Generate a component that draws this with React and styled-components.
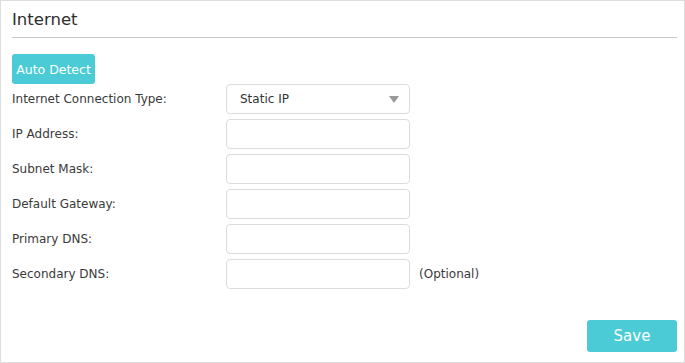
import styled, { createGlobalStyle } from "styled-components";

const Global = createGlobalStyle`
  html, body {
    margin: 0;
    padding: 0;
    background: #fff;
  }
  body {
    font-family: "DejaVu Sans", Verdana, sans-serif;
    color: #333;
  }
`;

const Panel = styled.div`
  width: 685px;
  height: 363px;
  box-sizing: border-box;
  border: 1px solid #ddd;
  padding: 0 7px 10px 11px;
  display: flex;
  flex-direction: column;
`;

const Title = styled.h2`
  margin: 0;
  padding: 10px 0 8px 0;
  font-size: 16.5px;
  font-weight: normal;
  color: #2e2e2e;
  border-bottom: 1px solid #c8c8c8;
  line-height: 18px;
`;

const Button = styled.button`
  font-family: inherit;
  background: #4acbd6;
  color: #fff;
  border: none;
  border-radius: 3px;
  cursor: pointer;
  font-size: ${(p) => (p.big ? "15px" : "12.5px")};
  font-weight: ${(p) => (p.big ? "normal" : "500")};
  width: ${(p) => (p.big ? "90px" : "83px")};
  height: ${(p) => (p.big ? "32px" : "30px")};
  padding: 0;
`;

const DetectWrap = styled.div`
  margin-top: 16px;
`;

const Form = styled.div`
  display: flex;
  flex-direction: column;
  gap: 5px;
`;

const Row = styled.div`
  display: flex;
  align-items: center;
  height: 30px;
`;

const Label = styled.label`
  width: 214px;
  font-size: 12px;
  color: #3a3a3a;
`;

const Field = styled.div`
  position: relative;
  width: 184px;
  height: 30px;
  box-sizing: border-box;
  border: 1px solid #dcdcdc;
  border-radius: 4px;
  background: #fff;
  display: flex;
  align-items: center;
  padding-left: 13px;
  font-size: 12px;
  color: #333;
`;

const Arrow = styled.span`
  position: absolute;
  right: 10px;
  top: 11px;
  width: 0;
  height: 0;
  border-left: 5.5px solid transparent;
  border-right: 5.5px solid transparent;
  border-top: 7px solid #999;
`;

const Hint = styled.span`
  margin-left: 9px;
  font-size: 12px;
  color: #3a3a3a;
`;

const Footer = styled.div`
  margin-top: auto;
  display: flex;
  justify-content: flex-end;
`;

const fields = [
  "IP Address:",
  "Subnet Mask:",
  "Default Gateway:",
  "Primary DNS:",
  "Secondary DNS:",
];

export default function App() {
  return (
    <>
      <Global />
      <Panel>
        <Title>Internet</Title>
        <DetectWrap>
          <Button>Auto Detect</Button>
        </DetectWrap>
        <Form>
          <Row>
            <Label>Internet Connection Type:</Label>
            <Field>
              Static IP
              <Arrow />
            </Field>
          </Row>
          {fields.map((f, i) => (
            <Row key={f}>
              <Label>{f}</Label>
              <Field />
              {i === fields.length - 1 && <Hint>(Optional)</Hint>}
            </Row>
          ))}
        </Form>
        <Footer>
          <Button big>Save</Button>
        </Footer>
      </Panel>
    </>
  );
}
